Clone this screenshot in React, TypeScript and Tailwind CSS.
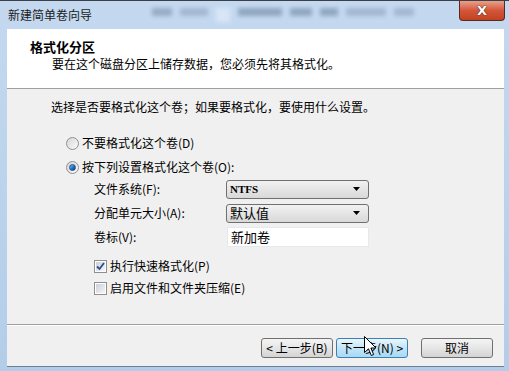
import React from "react";

const font = { fontFamily: '"Noto Sans CJK SC", "Liberation Sans", sans-serif' };

const Radio = ({ checked }: { checked?: boolean }) => (
    <span className="flex items-center justify-center w-[13px] h-[13px] rounded-full border border-[#8e8f8f] bg-gradient-to-br from-[#d6d6d6] to-[#fbfbfb]">
        {checked && (
            <span className="w-[7px] h-[7px] rounded-full bg-gradient-to-br from-[#7cc1f0] via-[#2a77c4] to-[#0c3f83] border border-[#1d4f8d]" />
        )}
    </span>
);

const Checkbox = ({ checked }: { checked?: boolean }) => (
    <span className="flex items-center justify-center w-[13px] h-[13px] border border-[#8e8f8f] bg-white p-[1px]">
        <span className="relative flex items-center justify-center w-full h-full bg-gradient-to-br from-[#cbcfd5] to-[#f6f6f6]">
            {checked && (
                <svg width="9" height="9" viewBox="0 0 9 9" className="absolute">
                    <path d="M1 4.5 L3.5 7 L8 1" fill="none" stroke="#2b4f8e" strokeWidth="1.8" />
                </svg>
            )}
        </span>
    </span>
);

const Select = ({ value, latin }: { value: string; latin?: boolean }) => (
    <div className="flex items-center w-[143px] h-[19px] rounded-[3px] border border-[#707070] bg-gradient-to-b from-[#f2f2f2] to-[#d8d8d8] pl-[3px] pr-[8px]">
        <span
            className={latin ? "flex-1 text-[11px] font-bold text-black" : "flex-1 text-[13px] text-black"}
            style={latin ? { fontFamily: '"Liberation Serif", serif' } : undefined}
        >
            {value}
        </span>
        <svg width="7" height="4" viewBox="0 0 7 4">
            <path d="M0 0 H7 L3.5 4 Z" fill="#000" />
        </svg>
    </div>
);

const Button = ({ children, focused }: { children: React.ReactNode; focused?: boolean }) => (
    <div
        className={
            focused
                ? "flex items-center justify-center w-[72px] h-[20px] rounded-[3px] border border-[#3c7fb1] bg-gradient-to-b from-[#eaf6fd] via-[#c4e5f7] to-[#a7d9f5] text-[12px] text-black"
                : "flex items-center justify-center w-[72px] h-[20px] rounded-[3px] border border-[#707070] bg-gradient-to-b from-[#f4f4f4] via-[#e6e6e6] to-[#d3d3d3] text-[12px] text-black"
        }
    >
        {children}
    </div>
);

export default function App() {
    return (
        <div className="relative w-[509px] h-[371px] overflow-hidden bg-gradient-to-b from-[#c4d9f0] to-[#b3cde9] text-[12px] text-black" style={font}>
            {/* 标题栏 */}
            <div className="flex items-start h-[29px] border-t border-[#3a3f48]">
                <span className="pl-[8px] pt-[5px] text-[12px] leading-[18px] text-[#1b1b1b]">新建简单卷向导</span>
                <div className="flex flex-1 gap-[8px] pl-[60px] pt-[7px] blur-[2px] opacity-60">
                    <span className="w-[20px] h-[8px] bg-[#7a8ea8]" />
                    <span className="w-[28px] h-[8px] bg-[#8ea2bb]" />
                    <span className="w-[14px] h-[14px] bg-[#e6f0fb]" />
                    <span className="w-[44px] h-[8px] bg-[#6f85a0]" />
                    <span className="w-[22px] h-[8px] bg-[#6f85a0]" />
                    <span className="w-[18px] h-[8px] bg-[#6f85a0]" />
                    <span className="w-[40px] h-[8px] bg-[#8ea2bb]" />
                    <span className="w-[20px] h-[8px] bg-[#8ea2bb]" />
                </div>
                <div className="flex items-center justify-center w-[46px] h-[20px] mr-[4px] rounded-b-[4px] border border-t-0 border-[#5a2a1e] bg-gradient-to-b from-[#e8a08a] via-[#d3553a] to-[#c2421f]">
                    <span className="text-[13px] font-bold leading-none text-white" style={{ fontFamily: '"DejaVu Sans", sans-serif', textShadow: "0 0 1px #3a1a10, 0 0 1px #3a1a10" }}>
                        X
                    </span>
                </div>
            </div>

            {/* 客户区 */}
            <div className="flex flex-col ml-[7px] w-[497px] h-[338px] border-b border-[#6d7e93] bg-[#f0f0f0]">
                <div className="flex flex-col h-[60px] bg-white border-b border-[#a0a0a0] pl-[23px] pt-[9px]">
                    <span className="text-[13px] font-bold leading-[18px]">格式化分区</span>
                    <span className="pl-[22px] text-[12px] leading-[16px]">要在这个磁盘分区上储存数据，您必须先将其格式化。</span>
                </div>

                <div className="flex flex-col h-[235px] pl-[44px] pt-[10px]">
                    <span className="leading-[16px]">选择是否要格式化这个卷；如果要格式化，要使用什么设置。</span>

                    <div className="flex items-center gap-[3px] mt-[20px] ml-[15px] h-[16px]">
                        <Radio />
                        <span>不要格式化这个卷(D)</span>
                    </div>
                    <div className="flex items-center gap-[3px] mt-[8px] ml-[15px] h-[16px]">
                        <Radio checked />
                        <span>按下列设置格式化这个卷(O):</span>
                    </div>

                    <div className="flex items-center mt-[4px] ml-[43px] h-[20px]">
                        <span className="w-[132px]">文件系统(F):</span>
                        <Select value="NTFS" latin />
                    </div>
                    <div className="flex items-center mt-[4px] ml-[43px] h-[20px]">
                        <span className="w-[132px]">分配单元大小(A):</span>
                        <Select value="默认值" />
                    </div>
                    <div className="flex items-center mt-[4px] ml-[43px] h-[20px]">
                        <span className="w-[133px]">卷标(V):</span>
                        <div className="flex items-center w-[142px] h-[20px] bg-white border border-[#e3e9ef] pl-[3px] text-[13px]">新加卷</div>
                    </div>

                    <div className="flex items-center gap-[3px] mt-[11px] ml-[43px] h-[16px]">
                        <Checkbox checked />
                        <span>执行快速格式化(P)</span>
                    </div>
                    <div className="flex items-center gap-[3px] mt-[6px] ml-[43px] h-[16px]">
                        <Checkbox />
                        <span>启用文件和文件夹压缩(E)</span>
                    </div>
                </div>

                <div className="border-t border-[#a0a0a0] border-b border-b-white" />

                <div className="flex items-start pt-[12px] pl-[254px] gap-[3px]">
                    <Button>&lt; 上一步(B)</Button>
                    <Button focused>下一步(N) &gt;</Button>
                    <div className="ml-[10px]">
                        <Button>取消</Button>
                    </div>
                </div>
            </div>

            {/* 鼠标指针 */}
            <svg className="absolute left-[364px] top-[336px]" width="13" height="21" viewBox="0 0 13 21">
                <path d="M0.5 0.5 V16.5 L4.5 12.8 L7.3 19.5 L9.6 18.5 L6.9 12 H12 Z" fill="#fff" stroke="#000" strokeWidth="1" strokeLinejoin="round" />
            </svg>
        </div>
    );
}
